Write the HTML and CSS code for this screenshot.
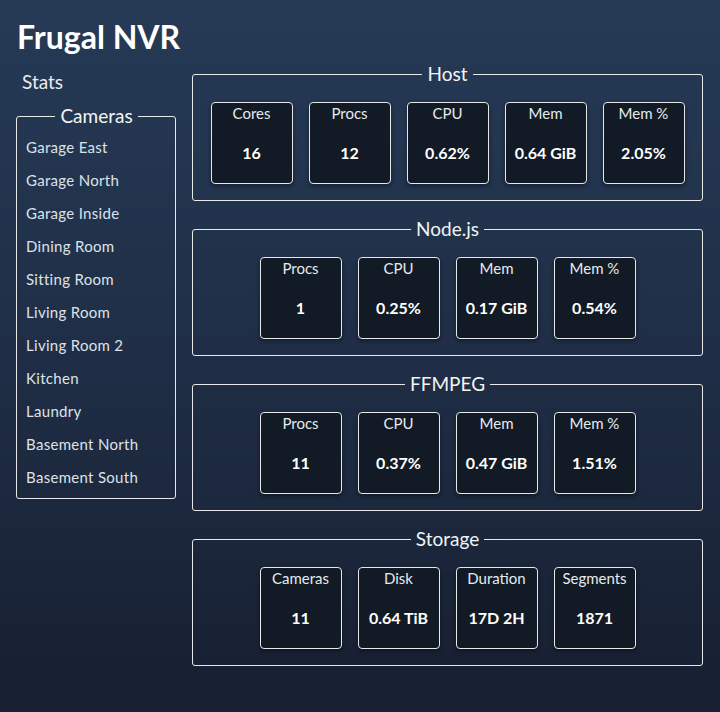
FILE: index.html
```html
<!DOCTYPE html>
<html>
<head>
<meta charset="utf-8">
<title>Frugal NVR</title>
<link rel="stylesheet" href="styles.css">
</head>
<body>
<h1 class="title">Frugal NVR</h1>
<div class="layout">
  <nav class="sidebar">
    <a class="nav-link">Stats</a>
    <fieldset class="group cameras">
      <legend>Cameras</legend>
      <ul class="camera-list">
        <li>Garage East</li>
        <li>Garage North</li>
        <li>Garage Inside</li>
        <li>Dining Room</li>
        <li>Sitting Room</li>
        <li>Living Room</li>
        <li>Living Room 2</li>
        <li>Kitchen</li>
        <li>Laundry</li>
        <li>Basement North</li>
        <li>Basement South</li>
      </ul>
    </fieldset>
  </nav>
  <main class="panels">
    <fieldset class="group panel">
      <legend>Host</legend>
      <div class="stats">
        <div class="stat"><div class="label">Cores</div><div class="value">16</div></div>
        <div class="stat"><div class="label">Procs</div><div class="value">12</div></div>
        <div class="stat"><div class="label">CPU</div><div class="value">0.62%</div></div>
        <div class="stat"><div class="label">Mem</div><div class="value">0.64 GiB</div></div>
        <div class="stat"><div class="label">Mem %</div><div class="value">2.05%</div></div>
      </div>
    </fieldset>
    <fieldset class="group panel">
      <legend>Node.js</legend>
      <div class="stats">
        <div class="stat"><div class="label">Procs</div><div class="value">1</div></div>
        <div class="stat"><div class="label">CPU</div><div class="value">0.25%</div></div>
        <div class="stat"><div class="label">Mem</div><div class="value">0.17 GiB</div></div>
        <div class="stat"><div class="label">Mem %</div><div class="value">0.54%</div></div>
      </div>
    </fieldset>
    <fieldset class="group panel">
      <legend>FFMPEG</legend>
      <div class="stats">
        <div class="stat"><div class="label">Procs</div><div class="value">11</div></div>
        <div class="stat"><div class="label">CPU</div><div class="value">0.37%</div></div>
        <div class="stat"><div class="label">Mem</div><div class="value">0.47 GiB</div></div>
        <div class="stat"><div class="label">Mem %</div><div class="value">1.51%</div></div>
      </div>
    </fieldset>
    <fieldset class="group panel">
      <legend>Storage</legend>
      <div class="stats">
        <div class="stat"><div class="label">Cameras</div><div class="value">11</div></div>
        <div class="stat"><div class="label">Disk</div><div class="value">0.64 TiB</div></div>
        <div class="stat"><div class="label">Duration</div><div class="value">17D 2H</div></div>
        <div class="stat"><div class="label">Segments</div><div class="value">1871</div></div>
      </div>
    </fieldset>
  </main>
</div>
</body>
</html>
```

FILE: styles.css
```css
html {
  height: 100%;
}
body {
  margin: 0;
  min-height: 712px;
  background: linear-gradient(180deg, #263a56 0%, #1f2e46 50%, #171f30 100%);
  color: #f2f4f6;
  font-family: Lato, "Open Sans", sans-serif;
}
.title {
  margin: 0;
  padding: 17px 0 0 17px;
  font-size: 32px;
  line-height: 40px;
  font-weight: 700;
  color: #ffffff;
  height: 45px;
  box-sizing: content-box;
}
.layout {
  display: grid;
  grid-template-columns: 160px 1fr;
  column-gap: 16px;
  padding: 0 17px 0 16px;
}
.sidebar {
  display: flex;
  flex-direction: column;
}
.nav-link {
  display: block;
  margin: 8px 0 10px 6px;
  font-size: 19px;
  line-height: 24px;
  color: #e8ecf0;
}
.group {
  margin: 0;
  border: 1px solid #e6e8ea;
  border-radius: 3px;
  min-width: 0;
}
.group legend {
  margin: 0 auto;
  padding: 0 5px;
  font-size: 19px;
  line-height: 24px;
  color: #f2f4f6;
}
.cameras {
  padding: 3px 8px 4px 9px;
}
.camera-list {
  list-style: none;
  margin: 0;
  padding: 0;
}
.camera-list li {
  font-size: 15px;
  line-height: 33px;
  color: #dde2e8;
  letter-spacing: 0.3px;
}
.panels {
  display: flex;
  flex-direction: column;
  gap: 16px;
}
.panel {
  padding: 16px 0 16px;
}
.stats {
  display: flex;
  justify-content: center;
  gap: 16px;
}
.stat {
  width: 82px;
  height: 82px;
  box-sizing: border-box;
  border: 1px solid #e6e8ea;
  border-radius: 4px;
  background: #111a25;
  box-shadow: 0 2px 4px rgba(0, 0, 0, 0.4);
  display: flex;
  flex-direction: column;
  align-items: center;
}
.label {
  font-size: 15px;
  line-height: 20px;
  color: #e6eaee;
}
.value {
  margin-top: 20px;
  font-size: 16px;
  line-height: 20px;
  font-weight: 700;
  color: #ffffff;
}
```
